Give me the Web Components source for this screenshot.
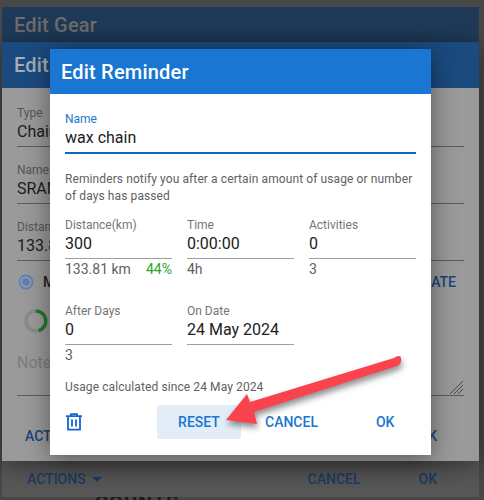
<!DOCTYPE html>
<html>
<head>
<meta charset="utf-8">
<title>Edit Reminder</title>
<style>
html, body { margin: 0; height: 100%; }
body {
    width: 484px;
    height: 500px;
    overflow: hidden;
    position: relative;
    background: #484848;
    font-family: Roboto, "Liberation Sans", sans-serif;
}
</style>
</head>
<body>
<template id="dialog-tpl">
    <style>
        :host {
            display: flex;
            flex-direction: column;
            position: absolute;
            box-sizing: border-box;
            left: var(--x);
            top: var(--y);
            width: var(--w);
            height: var(--h);
            background: var(--body-bg, #fff);
            box-shadow: var(--shadow, 0 4px 24px rgba(0,0,0,.45));
        }
        header {
            height: var(--head-h, 45px);
            flex: none;
            box-sizing: border-box;
            padding: 0 var(--head-pad, 11px);
            display: flex;
            align-items: center;
            background: var(--head-bg, #1976d2);
            color: var(--head-fg, #fff);
            font-size: 20px;
            font-weight: 500;
            letter-spacing: .2px;
        }
        main { flex: 1; min-height: 0; padding: var(--pad, 0); }
        footer {
            flex: none;
            height: var(--foot-h, 52px);
            display: flex;
            align-items: center;
            padding: var(--foot-pad, 0);
        }
    </style>
    <header><slot name="title"></slot></header>
    <main><slot></slot></main>
    <footer><slot name="actions"></slot></footer>
</template>

<template id="field-tpl">
    <style>
        :host { display: block; font-size: 16px; color: var(--fg, #212121); min-width: 0; }
        .label { display: block; height: 14px; line-height: 14px; font-size: 12px; color: var(--label, #757575); }
        .value { height: 22px; line-height: 22px; margin-top: 1px; white-space: nowrap; overflow: hidden; }
        .line { border-bottom: 1px solid var(--line, #999); margin-top: 3px; }
        :host([focused]) .label { color: #1976d2; }
        :host([focused]) .line { border-bottom: 2px solid #1565c0; }
        .sub { display: flex; justify-content: space-between; font-size: 14px; line-height: 18px; color: #616161; margin-top: 1px; }
        .sub ::slotted(b) { font-weight: 400; color: #2aa52a; }
    </style>
    <span class="label"></span>
    <div class="value"></div>
    <div class="line"></div>
    <div class="sub"><slot></slot></div>
</template>

<template id="button-tpl">
    <style>
        :host {
            display: inline-flex;
            align-items: center;
            justify-content: center;
            box-sizing: border-box;
            height: 34px;
            border-radius: 3px;
            font-size: 14px;
            font-weight: 500;
            color: var(--btn-fg, #1976d2);
            background: var(--btn-bg, transparent);
        }
    </style>
    <slot></slot>
</template>

<script>
function useTemplate(el, id) {
    el.attachShadow({ mode: "open" }).appendChild(document.getElementById(id).content.cloneNode(true));
}

class AppDialog extends HTMLElement {
    constructor() {
        super();
        useTemplate(this, "dialog-tpl");
    }
}

class TextField extends HTMLElement {
    constructor() {
        super();
        useTemplate(this, "field-tpl");
    }
    connectedCallback() {
        this.shadowRoot.querySelector(".label").textContent = this.getAttribute("label") || "";
        this.shadowRoot.querySelector(".value").textContent = this.getAttribute("value") || "";
    }
}

class AppButton extends HTMLElement {
    constructor() {
        super();
        useTemplate(this, "button-tpl");
    }
}

class ReminderForm extends HTMLElement {
    constructor() {
        super();
        this.attachShadow({ mode: "open" });
    }
    connectedCallback() {
        this.shadowRoot.innerHTML = `
        <style>
            :host { display: block; }
            .note { font-size: 12px; line-height: 17px; color: #616161; margin: 16px 0 0; letter-spacing: .1px; }
            .grid { display: grid; grid-template-columns: repeat(3, 107px); column-gap: 15px; row-gap: 26px; margin-top: 13px; }
            .since { margin-top: 15px; }
            text-field { --line: #9e9e9e; }
        </style>
        <text-field focused label="Name" value="wax chain"></text-field>
        <p class="note">Reminders notify you after a certain amount of usage or number of days has passed</p>
        <div class="grid">
            <text-field label="Distance(km)" value="300"><span>133.81 km</span><b>44%</b></text-field>
            <text-field label="Time" value="0:00:00">4h</text-field>
            <text-field label="Activities" value="0">3</text-field>
            <text-field label="After Days" value="0">3</text-field>
            <text-field label="On Date" value="24 May 2024"></text-field>
        </div>
        <p class="note since">Usage calculated since 24 May 2024</p>`;
        const sub = this.shadowRoot.querySelectorAll("text-field")[1];
        const bold = sub.parentNode.querySelector("b");
        bold.style.cssText = "font-weight:400;color:#2aa52a";
    }
}

class GearBehind extends HTMLElement {
    constructor() {
        super();
        this.attachShadow({ mode: "open" });
    }
    connectedCallback() {
        this.shadowRoot.innerHTML = `
        <style>
            :host { display: flex; flex-direction: column; gap: 15px; --fg: #1d1d1d; --label: #555; --line: #5c5c5c; }
            .row { display: flex; align-items: center; height: 22px; font-size: 14px; font-weight: 500; color: #1f1f1f; gap: 8px; margin-top: -6px; }
            .row .late { margin-left: auto; margin-right: 8px; color: #17457c; }
            svg { display: block; flex: none; }
            .notes { font-size: 16px; color: #7c7c7c; margin-top: 4px; height: 42px; border-bottom: 1px solid #5c5c5c; position: relative; }
            .grip { position: absolute; right: 0; bottom: 0; }
        </style>
        <text-field label="Type" value="Chain"></text-field>
        <text-field label="Name" value="SRAM"></text-field>
        <text-field label="Distance" value="133.81"></text-field>
        <div class="row">
            <svg width="18" height="18" viewBox="0 0 18 18"><circle cx="9" cy="9" r="6.6" fill="none" stroke="#5a7fbf" stroke-width="1.6"/><circle cx="9" cy="9" r="3.8" fill="#5a7fbf"/></svg>
            <span>M</span><span class="late">LATE</span>
        </div>
        <svg width="26" height="26" viewBox="0 0 26 26" style="margin:0 0 0 6px">
            <circle cx="13" cy="13" r="10" fill="none" stroke="#8a8a8a" stroke-width="3.4"/>
            <path d="M13 3a10 10 0 0 1 2.6 19.6" fill="none" stroke="#1d7a2f" stroke-width="3.4"/>
        </svg>
        <div class="notes">Notes
            <svg class="grip" width="15" height="15" viewBox="0 0 15 15" stroke="#4a4a4a" stroke-width="1"><path d="M1 14 14 1M5 14 14 5M9 14 14 9"/></svg>
        </div>
    </div>`;
    }
}

customElements.define("app-dialog", AppDialog);
customElements.define("text-field", TextField);
customElements.define("app-button", AppButton);
customElements.define("reminder-form", ReminderForm);
customElements.define("gear-behind", GearBehind);
</script>

<div style="position:absolute;left:95px;top:493px;font:700 20px/20px Roboto,'Liberation Sans',sans-serif;letter-spacing:1px;color:#1c1c1c">COUNTS</div>

<app-dialog style="--x:2px;--y:7px;--w:477px;--h:490px;--body-bg:#575757;--head-bg:#1f3a59;--head-fg:#6e6e6e;--head-h:35px;--head-pad:12px;--foot-h:36px;--foot-pad:0 42px 0 25px;--shadow:none">
    <span slot="title">Edit Gear</span>
    <div slot="actions" style="display:flex;width:100%;align-items:center;font-size:14px;font-weight:500;color:#1c3d64">
        <span>ACTIONS</span>
        <svg width="10" height="5" viewBox="0 0 10 5" style="margin-left:6px"><path d="M0 0h10L5 5z" fill="#1c3d64"/></svg>
        <span style="margin-left:auto">CANCEL</span>
        <span style="margin-left:58px">OK</span>
    </div>
</app-dialog>

<app-dialog style="--x:2px;--y:42px;--w:477px;--h:419px;--body-bg:#9a9a9a;--head-bg:#1b4a7f;--head-fg:#a6adb5;--head-h:46px;--head-pad:12px;--pad:18px 15px 0;--foot-h:50px;--foot-pad:0 42px 0 23px">
    <span slot="title">Edit Gear</span>
    <gear-behind></gear-behind>
    <div slot="actions" style="display:flex;width:100%;font-size:14px;font-weight:500;color:#17457c">
        <span>ACTIONS</span><span style="margin-left:auto">OK</span>
    </div>
</app-dialog>

<app-dialog style="--x:50px;--y:49px;--w:381px;--h:406px;--head-h:45px;--pad:18px 15px 0;--foot-h:50px;--foot-pad:0 15px 8px 15px">
    <span slot="title">Edit Reminder</span>
    <reminder-form></reminder-form>
    <div slot="actions" style="display:flex;width:100%;align-items:center">
        <svg width="18" height="18" viewBox="0 0 18 18" style="margin-left:0" fill="none" stroke="#1565d8" stroke-width="1.8"><path d="M1 3.2h16M6 3V1.2h6V3M3 3.5V16.6h12V3.5M7 6.5v7M11 6.5v7"/></svg>
        <app-button style="margin-left:74px;width:84px;--btn-bg:#e3edf8">RESET</app-button>
        <app-button style="margin-left:24px">CANCEL</app-button>
        <app-button style="margin-left:58px">OK</app-button>
    </div>
</app-dialog>

<svg width="484" height="500" viewBox="0 0 484 500" style="position:absolute;left:0;top:0;pointer-events:none;filter:drop-shadow(1px 4px 3px rgba(0,0,0,.45))">
    <path d="M400.5 356.5 Q403 363 397 366 L254 412 L257 424 L226 420 L247 394 L250 402 L394 358 Q398 355 400.5 356.5Z" fill="#f9444e"/>
</svg>
</body>
</html>
